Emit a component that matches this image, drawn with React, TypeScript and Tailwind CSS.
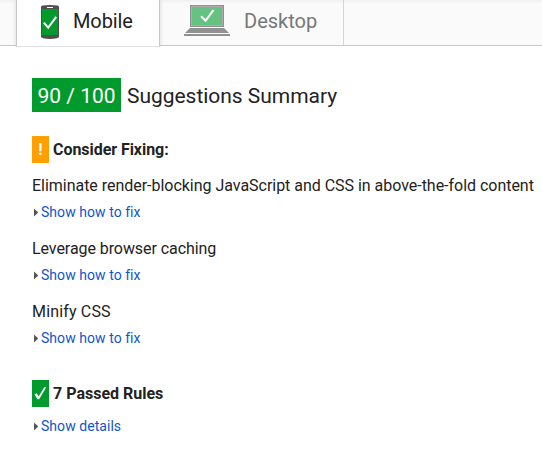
const rules = [
  { title: 'Eliminate render-blocking JavaScript and CSS in above-the-fold content', tracking: 'tracking-[-0.027px]' },
  { title: 'Leverage browser caching', tracking: 'tracking-[-0.07px]' },
  { title: 'Minify CSS', tracking: 'tracking-[0.16px]' },
];

function PhoneIcon() {
  return (
    <svg width="18" height="34" viewBox="0 0 18 34" className="shrink-0">
      <path d="M0 2Q0 .8 1.5.5Q9-.4 16.5.5Q18 .8 18 2V31.5Q18 32.8 16 33.3Q9 34.6 2 33.3Q0 32.8 0 31.5Z" fill="#4f4f4f" />
      <rect x="1" y="4" width="16" height="26" fill="#009a2d" />
      <rect x="6" y="2" width="6" height="1" fill="#fff" />
      <path d="M2.8 17.7 7.2 22.6 15.2 11.9" fill="none" stroke="#fff" strokeWidth="2" />
    </svg>
  );
}

function LaptopIcon() {
  return (
    <svg width="46" height="31" viewBox="0 0 46 31" className="shrink-0">
      <rect x="6" y="0" width="34" height="22" fill="#919191" />
      <rect x="7" y="1" width="32" height="20" fill="#b2a9b0" />
      <rect x="8" y="2" width="30" height="18" fill="#66c280" />
      <path d="M6 23H40L45 28H1Z" fill="#919191" />
      <rect y="29" width="46" height="2" fill="#919191" />
      <path d="M17 11.3 21.6 15.8 29.5 5" fill="none" stroke="#fff" strokeWidth="2" />
    </svg>
  );
}

function Toggle({ label }: { label: string }) {
  return (
    <a className="flex h-5 items-center text-[14px] leading-5 tracking-[0.05px] text-[#15c]">
      <svg width="9" height="9" viewBox="0 0 9 9" className="shrink-0">
        <path d="M2 .5 6.2 4.5 2 8.5Z" fill="#555" />
      </svg>
      {label}
    </a>
  );
}

export default function App() {
  return (
    <div className="h-[452px] w-[542px] overflow-hidden bg-white font-['Roboto',sans-serif] text-[#222]">
      <nav className="flex h-[46px] border-b border-[#c8c8c8] bg-[#fafafa] bg-linear-to-b from-[#f1f1f1] to-[#fafafa] to-[4px] text-[20px]">
        <div className="ml-4 flex h-[47px] w-36 items-start border-x border-b border-x-[#c8c8c8] border-b-[#e2e2e2] bg-white pl-6 pt-[5px] shadow-[0_0_4px_rgba(0,0,0,0.15)] [clip-path:inset(0_-5px_0_-5px)]">
          <PhoneIcon />
          <span className="ml-[14px] mt-1 leading-6 tracking-[-0.1px]">Mobile</span>
        </div>
        <div className="flex w-[184px] items-start border-r border-[#d5d5d5] pl-6 pt-[5px] text-[#777]">
          <LaptopIcon />
          <span className="ml-[14px] mt-1 leading-6">Desktop</span>
        </div>
      </nav>
      <main className="pl-8 pt-8">
        <h1 className="flex items-center text-[21px] leading-9">
          <span className="mr-[6px] h-[34px] w-[89px] bg-[#009a2d] text-center text-white">90 / 100</span>
          <span className="h-[34px] tracking-[-0.03px]">Suggestions Summary</span>
        </h1>
        <h2 className="mt-6 flex items-center text-[16px] font-bold leading-[27px]">
          <span className="mr-1 h-[27px] w-[17px] bg-[#ffa000] text-center text-white">!</span>
          <span className="tracking-[-0.05px]">Consider Fixing:</span>
        </h2>
        <ul className="mt-3">
          {rules.map(({ title, tracking }) => (
            <li key={title} className="h-[63px] whitespace-nowrap">
              <p className={`text-[16px] leading-[22px] ${tracking}`}>{title}</p>
              <div className="pt-[5px]"><Toggle label="Show how to fix" /></div>
            </li>
          ))}
        </ul>
        <h2 className="mt-4 flex items-center text-[16px] font-bold leading-[27px]">
          <span className="mr-1 flex h-[27px] w-[17px] items-center justify-center bg-[#009a2d]">
            <svg width="17" height="27" viewBox="0 0 17 27">
              <path d="M2.5 14.2 4.7 13.2 6.6 16.4 12.2 7.2H14.3L7.2 19.2H5.4Z" fill="#fff" />
            </svg>
          </span>
          7 Passed Rules
        </h2>
        <div className="mt-[9px]"><Toggle label="Show details" /></div>
      </main>
    </div>
  );
}
